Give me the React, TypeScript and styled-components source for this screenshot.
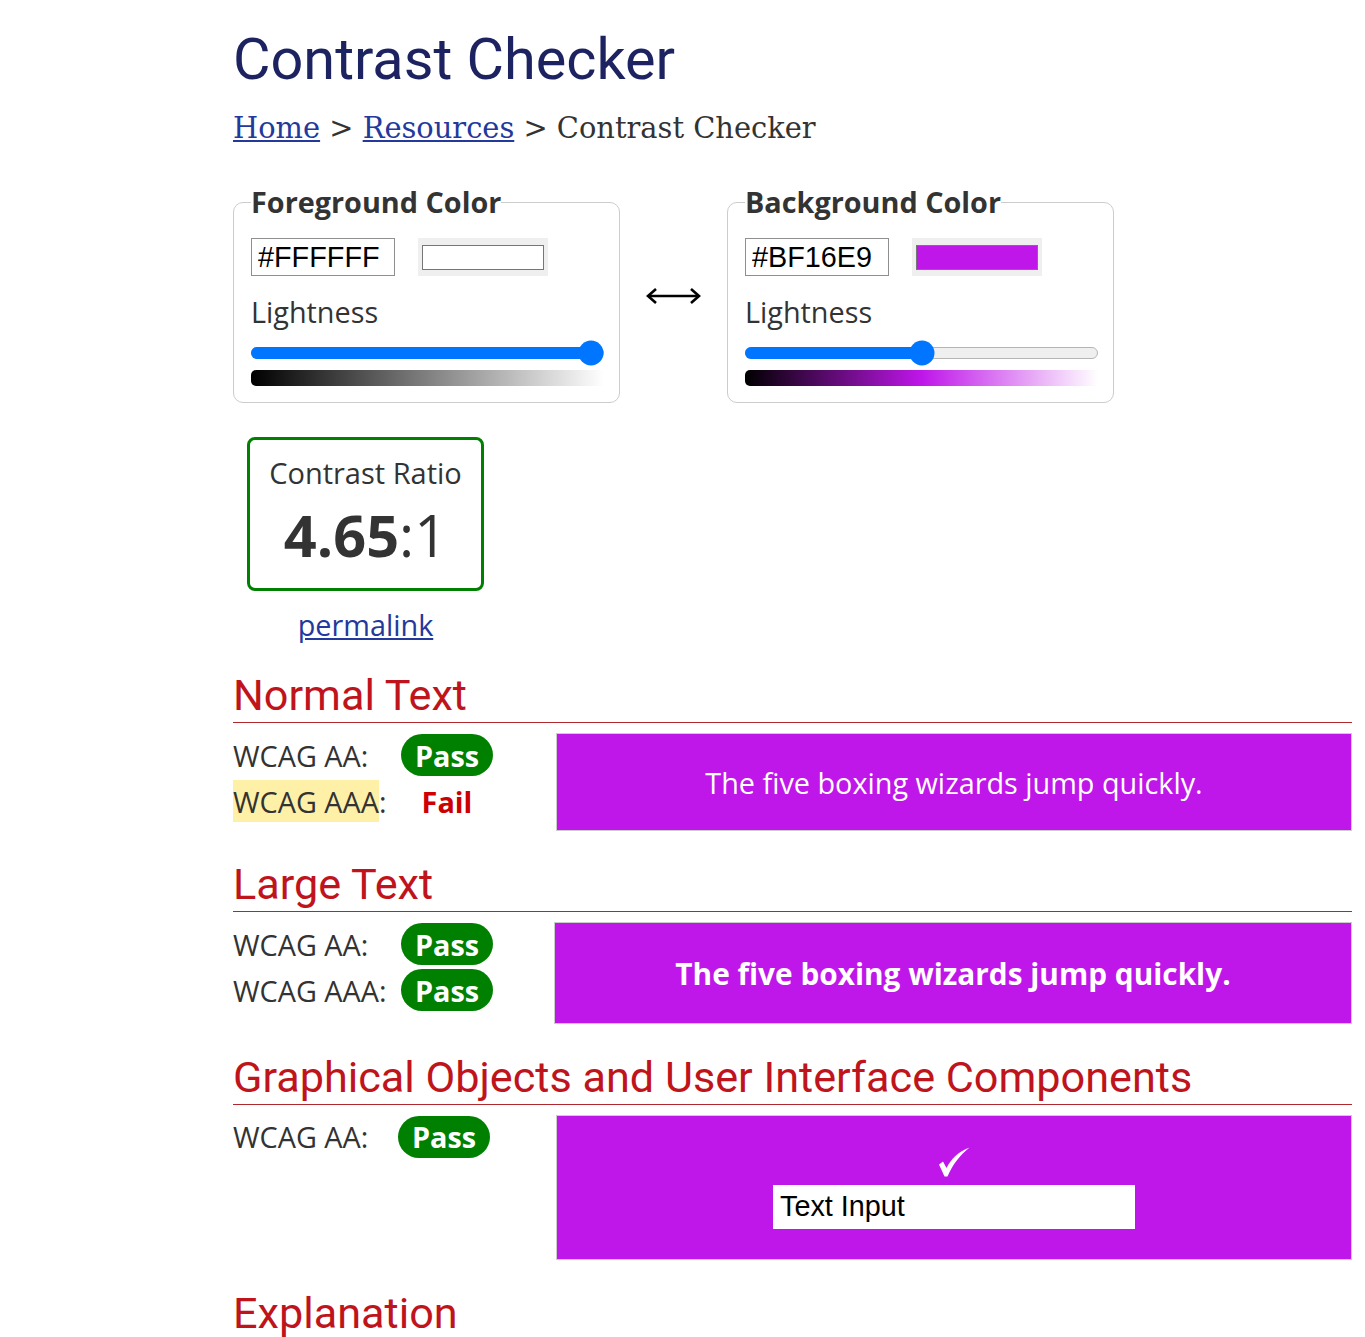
import React from 'react';
import styled, { createGlobalStyle } from 'styled-components';

const GlobalStyle = createGlobalStyle`
  body {
    margin: 0;
    background: #fff;
    color: #333;
    font-family: "Open Sans", "Liberation Sans", sans-serif;
    font-size: 28.8px;
  }
`;

const Page = styled.main`
  padding: 25px 13px 40px 233px;
`;

const Title = styled.h1`
  margin: 0;
  font-family: Roboto, "Liberation Sans", sans-serif;
  font-weight: 400;
  font-size: 57.6px;
  line-height: 1.2;
  color: #1d2361;
`;

const Crumbs = styled.nav`
  margin-top: 17px;
  font-family: "DejaVu Serif", "Liberation Serif", serif;
  font-size: 28.9px;
  line-height: 1.2;
  color: #333;

  a {
    color: #23399b;
    text-decoration: underline;
  }
`;

const Pickers = styled.div`
  display: flex;
  align-items: center;
  margin-top: 39px;
`;

const Picker = styled.fieldset`
  box-sizing: border-box;
  width: 387px;
  margin: 0;
  padding: 19px 15px 16px 17px;
  border: 1px solid #ccc;
  border-radius: 10px;
`;

const Legend = styled.legend`
  padding: 0;
  font-weight: 700;
  font-size: 28.8px;
  line-height: 1.2;
  color: #333;
`;

const Swap = styled.div`
  width: 107px;
  display: flex;
  justify-content: center;
  padding-top: 4px;
`;

const HexRow = styled.div`
  display: flex;
  gap: 23px;
`;

const HexInput = styled.input`
  box-sizing: border-box;
  width: 144px;
  height: 38px;
  margin: 0;
  padding: 0 6px;
  border: 1px solid #8f8f8f;
  font-family: "Liberation Sans", Arial, sans-serif;
  font-size: 28.8px;
  color: #000;
`;

const Swatch = styled.div`
  box-sizing: border-box;
  width: 130px;
  height: 38px;
  padding: 7px 4px 6px;
  background: #efefef;
`;

const SwatchFill = styled.div<{ $color: string }>`
  height: 100%;
  box-sizing: border-box;
  border: 1px solid #767676;
  background: ${p => p.$color};
`;

const FieldLabel = styled.div`
  margin-top: 19px;
  line-height: 1.2;
`;

const Slider = styled.div`
  margin-top: 11px;
  height: 25px;
  display: flex;
  align-items: center;
`;

const Track = styled.div`
  position: relative;
  width: 100%;
  height: 12px;
  box-sizing: border-box;
  border: 1px solid #b5b5b5;
  border-radius: 6px;
  background: #efefef;
`;

const TrackFill = styled.div<{ $value: number }>`
  position: absolute;
  left: -1px;
  top: -1px;
  bottom: -1px;
  width: calc(12.5px + (100% - 25px) * ${p => p.$value});
  border-radius: 6px;
  background: #0075ff;
`;

const Thumb = styled.div<{ $value: number }>`
  position: absolute;
  top: 50%;
  left: calc(12.5px + (100% - 25px) * ${p => p.$value});
  width: 25px;
  height: 25px;
  border-radius: 50%;
  background: #0075ff;
  transform: translate(-50%, -50%);
`;

const Ramp = styled.div<{ $mid: string }>`
  margin-top: 4px;
  height: 16px;
  border-radius: 5px 0 0 5px;
  background: linear-gradient(to right, #000, ${p => p.$mid}, #fff);
`;

const RatioBox = styled.div`
  box-sizing: border-box;
  width: 237px;
  margin: 34px 0 0 14px;
  padding: 16px 0 19px;
  border: 3px solid #008000;
  border-radius: 8px;
  text-align: center;
`;

const RatioLabel = styled.div`
  font-size: 29px;
  line-height: 1.2;
`;

const RatioValue = styled.div`
  margin-top: 9px;
  font-size: 57.6px;
  line-height: 1.2;

  b {
    font-weight: 700;
  }
`;

const Permalink = styled.div`
  width: 237px;
  margin: 17px 0 0 14px;
  text-align: center;
  line-height: 1.2;

  a {
    color: #23399b;
  }
`;

const Sections = styled.div`
  display: flex;
  flex-direction: column;
  gap: 28px;
  margin-top: 28px;
`;

const Heading = styled.h2<{ $rule?: boolean }>`
  margin: 0;
  font-family: Roboto, "Liberation Sans", sans-serif;
  font-weight: 400;
  font-size: 43.2px;
  line-height: 1.2;
  color: #c0141c;
  border-bottom: 1px solid ${p => (p.$rule === false ? 'transparent' : '#b0282d')};
`;

const Result = styled.div`
  display: flex;
  margin-top: 10px;
`;

const Checks = styled.div<{ $width: number }>`
  flex: none;
  width: ${p => p.$width}px;
  padding-top: 1px;
  display: flex;
  flex-direction: column;
  gap: 4px;
`;

const CheckLine = styled.div`
  display: flex;
  align-items: center;
  height: 42px;
`;

const Level = styled.span<{ $width: number }>`
  flex: none;
  width: ${p => p.$width}px;
`;

const Highlight = styled.span`
  background: #fff0a8;
  padding: 1.5px 0;
`;

const Badge = styled.span<{ $pass: boolean }>`
  width: 92px;
  height: 42px;
  border-radius: 21px;
  display: flex;
  align-items: center;
  justify-content: center;
  font-weight: 700;
  background: ${p => (p.$pass ? '#008000' : 'transparent')};
  color: ${p => (p.$pass ? '#fff' : '#cc0000')};
`;

const Sample = styled.div<{ $height: number; $bold?: boolean }>`
  flex: 1;
  box-sizing: border-box;
  height: ${p => p.$height}px;
  border: 1px solid #ccc;
  background: #bf16e9;
  color: #fff;
  display: flex;
  flex-direction: column;
  align-items: center;
  justify-content: center;
  font-weight: ${p => (p.$bold ? 700 : 400)};
  font-size: ${p => (p.$bold ? 29.8 : 28.8)}px;
`;

const CheckIcon = styled.svg`
  display: block;
  width: 31px;
  height: 30px;
  margin: 1px 0 8px;
`;

const TextField = styled.input`
  box-sizing: border-box;
  width: 362px;
  height: 44px;
  margin: 0;
  padding: 0 7px;
  border: none;
  background: #fff;
  font-family: "Liberation Sans", Arial, sans-serif;
  font-size: 28.8px;
  color: #000;
`;

type Check = { level: string; pass: boolean; flagged?: boolean };

function ResultRow({ checks, width, levelWidth, children }: { checks: Check[]; width: number; levelWidth: number; children: React.ReactNode }) {
  return (
    <Result>
      <Checks $width={width}>
        {checks.map(c => (
          <CheckLine key={c.level}>
            <Level $width={levelWidth}>
              {c.flagged ? <Highlight>{c.level}</Highlight> : c.level}:
            </Level>
            <Badge $pass={c.pass}>{c.pass ? 'Pass' : 'Fail'}</Badge>
          </CheckLine>
        ))}
      </Checks>
      {children}
    </Result>
  );
}

function ColorPicker({ legend, hex, color, value }: { legend: string; hex: string; color: string; value: number }) {
  return (
    <Picker>
      <Legend>{legend}</Legend>
      <HexRow>
        <HexInput defaultValue={hex} />
        <Swatch>
          <SwatchFill $color={color} />
        </Swatch>
      </HexRow>
      <FieldLabel>Lightness</FieldLabel>
      <Slider>
        <Track>
          <TrackFill $value={value} />
          <Thumb $value={value} />
        </Track>
      </Slider>
      <Ramp $mid={value === 1 ? '#808080' : color} />
    </Picker>
  );
}

export default function App() {
  const sample = 'The five boxing wizards jump quickly.';
  return (
    <Page>
      <GlobalStyle />
      <Title>Contrast Checker</Title>
      <Crumbs>
        <a href="#">Home</a> &gt; <a href="#">Resources</a> &gt; Contrast Checker
      </Crumbs>

      <Pickers>
        <ColorPicker legend="Foreground Color" hex="#FFFFFF" color="#ffffff" value={1} />
        <Swap>
          <svg width="55" height="18" viewBox="0 0 55 18" fill="none" stroke="#000" strokeWidth="2.6" strokeLinejoin="miter">
            <path d="M3 9h49" />
            <path d="M10 2L2 9l8 7" />
            <path d="M45 2l8 7-8 7" />
          </svg>
        </Swap>
        <ColorPicker legend="Background Color" hex="#BF16E9" color="#bf16e9" value={0.5} />
      </Pickers>

      <RatioBox>
        <RatioLabel>Contrast Ratio</RatioLabel>
        <RatioValue>
          <b>4.65</b>:1
        </RatioValue>
      </RatioBox>
      <Permalink>
        <a href="#">permalink</a>
      </Permalink>

      <Sections>
        <section>
          <Heading>Normal Text</Heading>
          <ResultRow
            width={323}
            levelWidth={168}
            checks={[
              { level: 'WCAG AA', pass: true },
              { level: 'WCAG AAA', pass: false, flagged: true },
            ]}
          >
            <Sample $height={98}>{sample}</Sample>
          </ResultRow>
        </section>

        <section>
          <Heading>Large Text</Heading>
          <ResultRow
            width={321}
            levelWidth={168}
            checks={[
              { level: 'WCAG AA', pass: true },
              { level: 'WCAG AAA', pass: true },
            ]}
          >
            <Sample $height={102} $bold>{sample}</Sample>
          </ResultRow>
        </section>

        <section>
          <Heading>Graphical Objects and User Interface Components</Heading>
          <ResultRow width={323} levelWidth={165} checks={[{ level: 'WCAG AA', pass: true }]}>
            <Sample $height={145}>
              <CheckIcon viewBox="0 0 31 30" aria-label="check">
                <path d="M0 17.5 L4 14.5 L7.5 21 C12 12 19 5 30.5 0.5 C21 8 14 17 8.5 29.5 L5.5 29.5 Z" fill="#fff" />
              </CheckIcon>
              <TextField defaultValue="Text Input" />
            </Sample>
          </ResultRow>
        </section>

        <section>
          <Heading $rule={false}>Explanation</Heading>
        </section>
      </Sections>
    </Page>
  );
}
